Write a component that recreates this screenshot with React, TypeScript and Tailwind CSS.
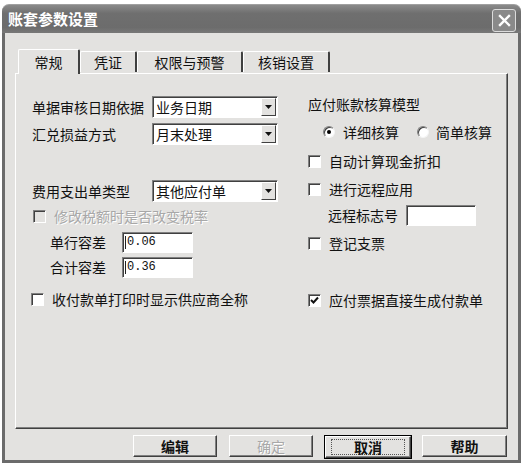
const font = "font-['Noto_Sans_CJK_SC','Noto_Sans_CJK_JP',sans-serif]";

const sunken =
  "border border-t-[#808080] border-l-[#808080] border-b-white border-r-white shadow-[inset_1px_1px_0_#404040]";

const Checkbox = ({ checked = false, disabled = false }: { checked?: boolean; disabled?: boolean }) => (
  <span
    className={`flex items-center justify-center w-[13px] h-[13px] shrink-0 ${sunken} ${
      disabled ? "bg-[#e3e2e0]" : "bg-white"
    }`}
  >
    {checked && (
      <svg width="9" height="9" viewBox="0 0 9 9">
        <path d="M1 4 L3.5 6.5 L8 1.5" fill="none" stroke="#111" strokeWidth="2" />
      </svg>
    )}
  </span>
);

const Radio = ({ checked = false }: { checked?: boolean }) => (
  <span className="flex items-center justify-center w-[12px] h-[12px] shrink-0 rounded-full bg-white border border-t-[#808080] border-l-[#808080] border-b-[#f4f4f4] border-r-[#f4f4f4] shadow-[inset_1px_1px_0_#404040]">
    {checked && <span className="w-[4px] h-[4px] rounded-full bg-black" />}
  </span>
);

const Select = ({ value }: { value: string }) => (
  <div className={`flex items-center w-[126px] h-[22px] bg-white ${sunken}`}>
    <span className="flex-1 pl-[3px] text-[14px] leading-none text-[#111]">{value}</span>
    <span className="flex items-center justify-center w-[15px] h-[18px] mr-[1px] bg-[#e3e2e0] border border-t-white border-l-white border-r-[#404040] border-b-[#404040]">
      <svg width="7" height="5" viewBox="0 0 7 5">
        <path d="M0 0 H7 L3.5 4 Z" fill="#111" />
      </svg>
    </span>
  </div>
);

const Input = ({ value, w }: { value?: string; w: string }) => (
  <div className={`flex items-center h-[21px] bg-white ${sunken} ${w}`}>
    {value && (
      <>
        <span className="ml-[2px] w-px h-[13px] bg-[#222]" />
        <span className="pl-[1px] text-[12px] leading-none text-[#111] font-['Liberation_Mono',monospace]">
          {value}
        </span>
      </>
    )}
  </div>
);

const CheckRow = ({
  label,
  checked,
  disabled,
  className = "",
}: {
  label: string;
  checked?: boolean;
  disabled?: boolean;
  className?: string;
}) => (
  <div className={`flex items-center h-[20px] gap-[8px] ${className}`}>
    <Checkbox checked={checked} disabled={disabled} />
    <span
      className={`text-[14px] leading-none ${
        disabled ? "text-[#a8a8a8] [text-shadow:1px_1px_0_#fff]" : "text-[#111]"
      }`}
    >
      {label}
    </span>
  </div>
);

const Tab = ({ label, w, active = false }: { label: string; w: string; active?: boolean }) => (
  <div
    className={`flex items-center justify-center ${w} ${
      active ? "relative z-10 h-[25px] -mb-px bg-[#e3e2e0]" : "h-[21px] mb-px"
    } border-t border-l border-t-white border-l-white border-r-2 border-r-[#404040] rounded-t-[2px] text-[14px] leading-none text-[#111]`}
  >
    {label}
  </div>
);

const Button = ({
  label,
  w,
  disabled = false,
  def = false,
  className = "",
}: {
  label: string;
  w: string;
  disabled?: boolean;
  def?: boolean;
  className?: string;
}) => (
  <div className={`${def ? "border border-black" : ""} ${className}`}>
    <div
      className={`flex items-center justify-center h-[22px] ${w} bg-[#e3e2e0] border border-t-white border-l-white border-r-[#404040] border-b-[#404040] shadow-[inset_-1px_-1px_0_#808080]`}
    >
      <span
        className={`flex items-center justify-center h-[16px] px-[14px] text-[14px] leading-none ${
          def ? "border border-dotted border-[#555] w-[74px]" : ""
        } ${disabled ? "text-[#a8a8a8] [text-shadow:1px_1px_0_#fff]" : "text-[#111] font-bold"}`}
      >
        {label}
      </span>
    </div>
  </div>
);

export default function App() {
  return (
    <div className={`w-[524px] h-[465px] bg-white pt-[4px] pl-[2px] ${font}`}>
      <div className="w-[519px] flex flex-col">
        {/* 标题栏 */}
        <div className="flex items-start justify-between h-[29px] rounded-t-[7px] bg-[linear-gradient(to_bottom,#8a8a8a,#6f6f6f_30%,#6c6c6c_80%,#787878)] border-t border-[#a0a0a0]">
          <span className="ml-[6px] mt-[5px] text-[15px] font-bold leading-[18px] text-white">
            账套参数设置
          </span>
          <div className="mr-[5px] mt-[4px] flex items-center justify-center w-[24px] h-[23px] rounded-[3px] bg-[#8a8a8a] border border-[#dcdcdc]">
            <svg width="13" height="13" viewBox="0 0 13 13">
              <path d="M2 2 L11 11 M11 2 L2 11" stroke="#fff" strokeWidth="2.4" strokeLinecap="square" />
            </svg>
          </div>
        </div>

        {/* 主体 */}
        <div className="flex flex-col h-[430px] bg-[#e3e2e0] border-x-[3px] border-b-[3px] border-[#6b6b6b]">
          <div className="flex items-end h-[25px] mt-[15px] ml-[13px]">
            <Tab label="常规" w="w-[62px]" active />
            <Tab label="凭证" w="w-[57px]" />
            <Tab label="权限与预警" w="w-[106px]" />
            <Tab label="核销设置" w="w-[87px]" />
          </div>

          <div className="flex ml-[10px] w-[493px] h-[356px] border-t border-l border-t-white border-l-white border-r border-b border-r-[#404040] border-b-[#404040] shadow-[inset_-1px_-1px_0_#808080]">
            {/* 左列 */}
            <div className="flex flex-col w-[291px] pl-[16px] pt-[22px]">
              <div className="flex items-center h-[22px]">
                <span className="w-[120px] text-[14px] leading-none text-[#111]">单据审核日期依据</span>
                <Select value="业务日期" />
              </div>
              <div className="flex items-center h-[22px] mt-[5px]">
                <span className="w-[120px] text-[14px] leading-none text-[#111]">汇兑损益方式</span>
                <Select value="月末处理" />
              </div>
              <div className="flex items-center h-[22px] mt-[35px]">
                <span className="w-[120px] text-[14px] leading-none text-[#111]">费用支出单类型</span>
                <Select value="其他应付单" />
              </div>
              <CheckRow label="修改税额时是否改变税率" disabled className="mt-[4px] pl-[1px]" />
              <div className="flex items-center h-[22px] mt-[5px] pl-[18px]">
                <span className="w-[72px] text-[14px] leading-none text-[#111]">单行容差</span>
                <Input value="0.06" w="w-[71px]" />
              </div>
              <div className="flex items-center h-[22px] mt-[3px] pl-[18px]">
                <span className="w-[72px] text-[14px] leading-none text-[#111]">合计容差</span>
                <Input value="0.36" w="w-[71px]" />
              </div>
              <CheckRow label="收付款单打印时显示供应商全称" className="mt-[11px] -ml-[1px]" />
            </div>

            {/* 右列 */}
            <div className="flex flex-col flex-1 pt-[20px]">
              <div className="flex items-center h-[20px] pl-[1px] text-[14px] leading-none text-[#111]">
                应付账款核算模型
              </div>
              <div className="flex items-center h-[20px] mt-[8px] pl-[16px] text-[14px] leading-none text-[#111]">
                <Radio checked />
                <span className="ml-[8px]">详细核算</span>
                <span className="ml-[18px]">
                  <Radio />
                </span>
                <span className="ml-[7px]">简单核算</span>
              </div>
              <CheckRow label="自动计算现金折扣" className="mt-[9px] pl-[1px]" />
              <CheckRow label="进行远程应用" className="mt-[8px] pl-[1px]" />
              <div className="flex items-center h-[22px] mt-[5px] pl-[21px]">
                <span className="w-[78px] text-[14px] leading-none text-[#111]">远程标志号</span>
                <Input w="w-[70px]" />
              </div>
              <CheckRow label="登记支票" className="mt-[7px] pl-[1px]" />
              <CheckRow label="应付票据直接生成付款单" checked className="mt-[37px] pl-[1px]" />
            </div>
          </div>

          {/* 按钮 */}
          <div className="flex items-start mt-[6px] pl-[128px]">
            <Button label="编辑" w="w-[84px]" />
            <Button label="确定" w="w-[84px]" disabled className="ml-[12px]" />
            <Button label="取消" w="w-[86px]" def className="ml-[11px]" />
            <Button label="帮助" w="w-[85px]" className="ml-[10px]" />
          </div>
        </div>
      </div>
    </div>
  );
}
